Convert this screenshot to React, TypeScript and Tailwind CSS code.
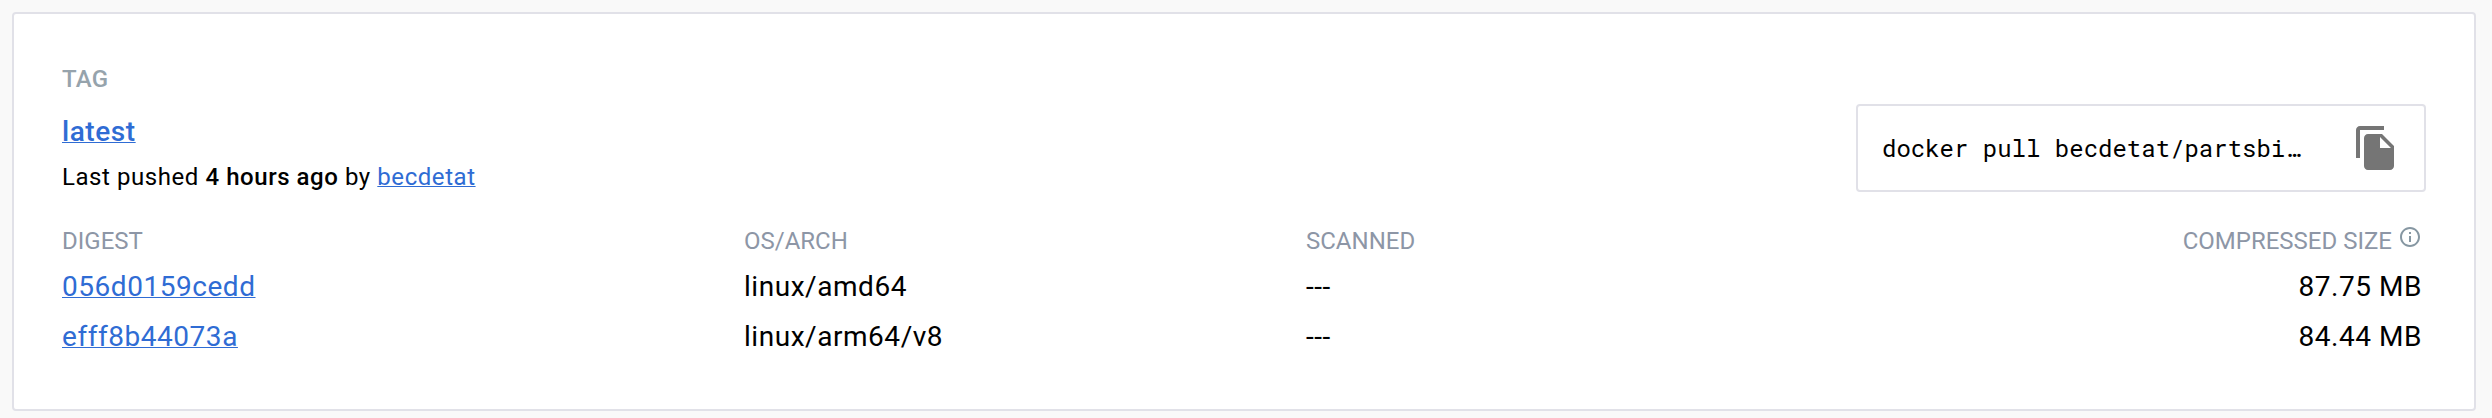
import React from "react";

const rows = [
  { digest: "056d0159cedd", arch: "linux/amd64", scanned: "---", size: "87.75 MB" },
  { digest: "efff8b44073a", arch: "linux/arm64/v8", scanned: "---", size: "84.44 MB" },
];

const GRID = "grid grid-cols-[682px_562px_1fr_auto]";

function CopyIcon() {
  return (
    <svg viewBox="0 0 24 24" className="size-12 shrink-0 fill-[#757575]">
      <path d="M16 1H4c-1.1 0-2 .9-2 2v14h2V3h12V1zm-1 4l6 6v10c0 1.1-.9 2-2 2H7.99C6.89 23 6 22.1 6 21l.01-14c0-1.1.89-2 1.99-2h7zm-1 7h5.5L14 6.5V12z" />
    </svg>
  );
}

function InfoIcon() {
  return (
    <svg viewBox="0 0 24 24" className="-mt-0.5 -mr-0.5 ml-1.5 size-6 shrink-0 fill-[#8697a2]">
      <path d="M11 7h2v2h-2zm0 4h2v6h-2zm1-9C6.48 2 2 6.48 2 12s4.48 10 10 10 10-4.48 10-10S17.52 2 12 2zm0 18c-4.41 0-8-3.59-8-8s3.59-8 8-8 8 3.59 8 8-3.59 8-8 8z" />
    </svg>
  );
}

function Link({ children }: { children: React.ReactNode }) {
  return (
    <a
      href="#"
      className="text-[#2f6cd4] underline decoration-1 underline-offset-1 [text-decoration-skip-ink:none]"
    >
      {children}
    </a>
  );
}

export default function App() {
  return (
    <div className="h-[418px] bg-[#f9f9f9] pt-3 pl-3 font-['Roboto',sans-serif] text-black">
      <section className="h-[399px] w-[2464px] rounded-[4px] border-2 border-[#e1e1e8] bg-white px-12 pt-[51px]">
        <header className="flex h-[162px] justify-between">
          <div>
            <div className="text-2xl leading-7 font-medium tracking-[0.3px] text-[#96a3ac]">TAG</div>
            <div className="mt-[23px] text-[28px] leading-8 font-medium tracking-[0.56px]">
              <Link>latest</Link>
            </div>
            <div className="mt-[15px] text-2xl leading-7 tracking-[0.56px]">
              Last pushed <strong className="font-medium">4 hours ago</strong> by <Link>becdetat</Link>
            </div>
          </div>
          <div className="mt-[39px] flex h-[88px] w-[570px] items-center justify-between rounded-[4px] border-2 border-[#e1e1e8] px-6">
            <code className="font-['Roboto_Mono','DejaVu_Sans_Mono',monospace] text-2xl whitespace-nowrap">
              docker pull becdetat/partsbi…
            </code>
            <CopyIcon />
          </div>
        </header>
        <div className={GRID + " text-2xl leading-7 text-[#8d96a6]"}>
          <div>DIGEST</div>
          <div>OS/ARCH</div>
          <div>SCANNED</div>
          <div className="mr-1.5 flex">
            COMPRESSED SIZE
            <InfoIcon />
          </div>
        </div>
        <div className="mt-[7px]">
          {rows.map((row) => (
            <div key={row.digest} className={GRID + " text-[28px] leading-[50px] tracking-[0.54px]"}>
              <div>
                <Link>{row.digest}</Link>
              </div>
              <div>{row.arch}</div>
              <div>{row.scanned}</div>
              <div className="mr-1 text-right">{row.size}</div>
            </div>
          ))}
        </div>
      </section>
    </div>
  );
}
